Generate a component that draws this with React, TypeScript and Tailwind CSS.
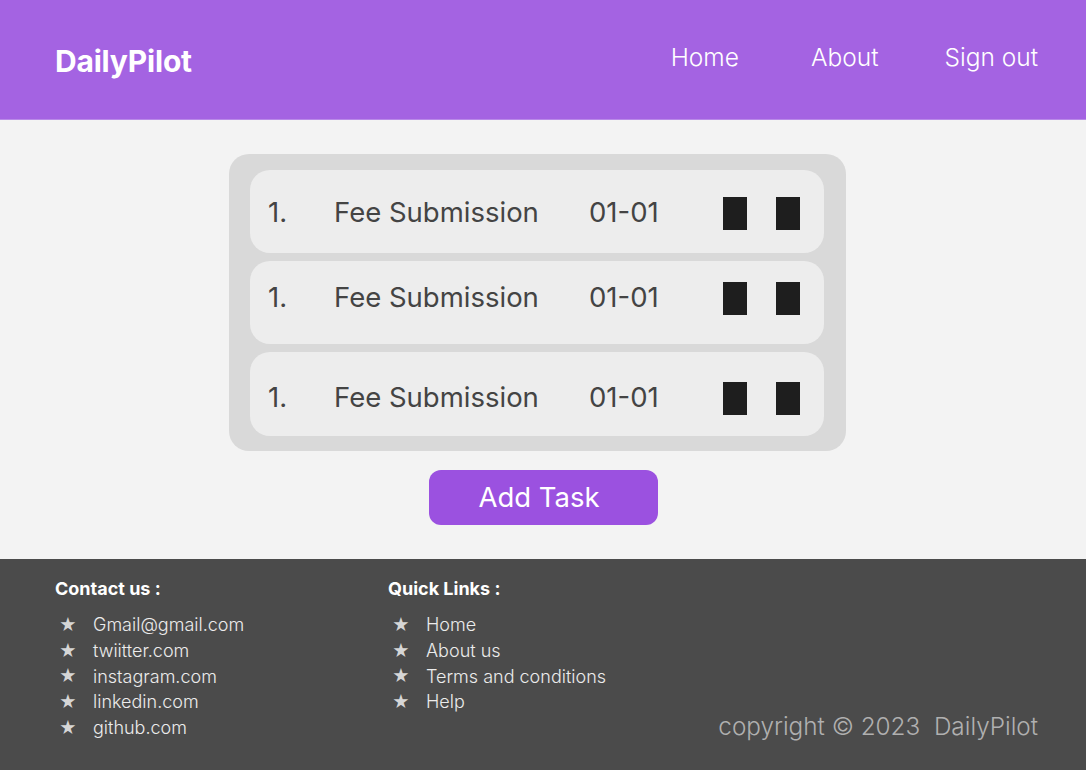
import React from "react";

const tasks = [
  { id: 1, title: "Fee Submission", date: "01-01", row: "h-[83px] pt-[3px]" },
  { id: 1, title: "Fee Submission", date: "01-01", row: "h-[83px] pb-[9px]" },
  { id: 1, title: "Fee Submission", date: "01-01", row: "h-[84px] pt-[8px]" },
];

const contacts = ["Gmail@gmail.com", "twiitter.com", "instagram.com", "linkedin.com", "github.com"];
const links = ["Home", "About us", "Terms and conditions", "Help"];

const FooterList = ({ items }: { items: string[] }) => (
  <ul className="mt-[10px] flex flex-col">
    {items.map((item) => (
      <li key={item} className="flex h-[25.7px] items-center text-[18px] font-light text-[#ececec]">
        <span className="w-[38px] pl-[4px] pt-[2px] text-[17px] text-[#d6d6d6]">★</span>
        {item}
      </li>
    ))}
  </ul>
);

export default function App() {
  return (
    <div className="flex min-h-[770px] flex-col bg-[#f3f3f3] font-['Inter',sans-serif]">
      {/* Header */}
      <header className="flex h-[120px] items-center justify-between border-b border-[#b98ae8] bg-[#a463e2] pl-[55px] pr-[48px] text-white">
        <h1 className="pt-[4px] text-[30px] font-bold tracking-[-0.2px]">DailyPilot</h1>
        <nav className="flex items-center gap-[66px] pb-[4px] text-[24.5px] font-light">
          <a href="#" className="mr-[6px]">Home</a>
          <a href="#">About</a>
          <a href="#">Sign out</a>
        </nav>
      </header>

      {/* Tasks */}
      <main className="flex flex-1 flex-col items-center pt-[34px] pb-[34px]">
        <div className="mr-[11px] flex w-[617px] flex-col gap-[8px] rounded-[20px] bg-[#d9d9d9] pl-[21px] pr-[22px] pt-[16px] pb-[15px]">
          {tasks.map((t, i) => (
            <div
              key={i}
              className={`flex ${t.row} items-center rounded-[20px] bg-[#ededed] pl-[18px] text-[27.5px] text-[#444444]`}
            >
              <span className="w-[66px]">{t.id}.</span>
              <span className="w-[255px]">{t.title}</span>
              <span className="w-[134px]">{t.date}</span>
              <span className="h-[33px] w-[24px] bg-[#1e1e1e]" />
              <span className="ml-[29px] h-[33px] w-[24px] bg-[#1e1e1e]" />
            </div>
          ))}
        </div>
        <button className="mt-[19px] h-[55px] w-[229px] rounded-[12px] bg-[#9b51e0] pr-[8px] text-[27.5px] text-white">
          Add Task
        </button>
      </main>

      {/* Footer */}
      <footer className="flex h-[211px] bg-[#4b4b4b] pl-[55px] pr-[48px] pt-[16px]">
        <div className="w-[333px]">
          <h3 className="text-[18px] font-bold text-white">Contact us :</h3>
          <FooterList items={contacts} />
        </div>
        <div className="flex-1">
          <h3 className="text-[18px] font-bold text-white">Quick Links :</h3>
          <FooterList items={links} />
        </div>
        <p className="self-end pb-[26px] text-[24.3px] font-light text-[#b0b0b0]">copyright © 2023&nbsp; DailyPilot</p>
      </footer>
    </div>
  );
}
